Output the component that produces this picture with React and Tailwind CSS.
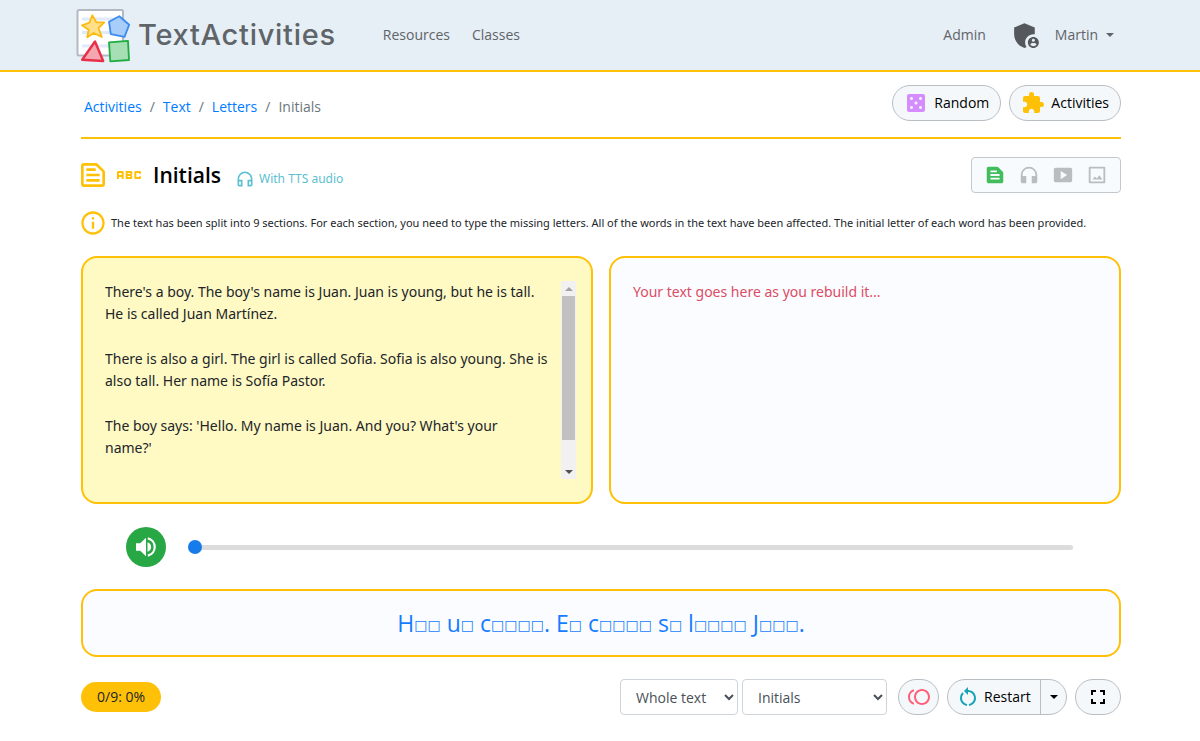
import React, { useState } from "react";
import {
  MdAdminPanelSettings,
  MdCasino,
  MdExtension,
  MdTextSnippet,
  MdOutlineTextSnippet,
  MdHeadphones,
  MdOutlineHeadphones,
  MdSmartDisplay,
  MdAbc,
  MdInfoOutline,
  MdToll,
  MdRestartAlt,
  MdFullscreen,
} from "react-icons/md";

const CRUMBS = ["Activities", "Text", "Letters"];

const PARAGRAPHS = [
  "There's a boy. The boy's name is Juan. Juan is young, but he is tall.\nHe is called Juan Martínez.",
  "There is also a girl. The girl is called Sofia. Sofia is also young. She is also tall. Her name is Sofía Pastor.",
  "The boy says: 'Hello. My name is Juan. And you? What's your\nname?'",
];

// every _ is a letter that still has to be typed
const PUZZLE = "H__ u_ c____. E_ c____ s_ l____ J___.";

function Logo() {
  return (
    <svg viewBox="0 0 55 55" className="h-[55px] w-[55px]" aria-hidden="true">
      <rect x="1.5" y="2" width="45.5" height="45.5" rx="1.5" fill="#fff" stroke="#b3b9c4" strokeWidth="2" />
      <path d="M6 11h36M6 24.5h36M6 38h36" stroke="#dfeafa" strokeWidth="3" />
      <g strokeWidth="1.8" strokeLinejoin="round">
        <path d="M16.3 7.3L20.3 14.3L28.3 14.3L22.5 20L25.8 29L17.7 25L11.3 29.3L12.6 21.8L6 17.3L13.5 14.6Z" fill="#ffe08a" stroke="#fdbb12" />
        <path d="M43.3 8.2L53.2 16.7L48.5 28.8L34.8 26.2L33 13.7Z" fill="#a9cdf9" stroke="#3b8cf0" />
        <path d="M19 33.5L6.2 51.8L27.2 53Z" fill="#f4a7b1" stroke="#e92f48" strokeWidth="2.4" />
        <path d="M33 34.3L52 32.8L53 52L34.3 53.3Z" fill="#a5dfb3" stroke="#1fad40" />
      </g>
    </svg>
  );
}

function SpeakerIcon() {
  return (
    <svg viewBox="0 0 24 24" className="h-6 w-6" aria-hidden="true">
      <path d="M2 8.2h4.2L12 2.8v18.4l-5.8-5.4H2z" fill="#fff" />
      <path d="M13.8 3.4a8.8 8.8 0 0 1 0 17.2" fill="none" stroke="#fff" strokeWidth="2.2" />
      <path d="M13.5 7.2a5 5 0 0 1 0 9.6z" fill="#fff" />
    </svg>
  );
}

function PictureIcon() {
  return (
    <svg viewBox="0 0 24 24" className="h-[22px] w-[22px]" aria-hidden="true">
      <path d="M4 4h16v16H4z" fill="none" stroke="currentColor" strokeWidth="2" strokeLinejoin="round" />
      <path d="M7 17l2.8-3.4 2 2.1 2.8-3.5 3.4 4.8z" fill="currentColor" />
    </svg>
  );
}

function Caret() {
  return <span className="inline-block border-x-4 border-t-4 border-x-transparent border-t-current" />;
}

// Scroll bar of the source text
function ScrollBar() {
  return (
    <div className="flex w-[15px] shrink-0 flex-col items-center bg-[#f1f1f1]" aria-hidden="true">
      <div className="flex h-[15px] items-center">
        <span className="border-x-4 border-b-4 border-x-transparent border-b-[#a3a3a3]" />
      </div>
      <div className="w-[13px] grow-[6] bg-[#c1c1c1]" />
      <div className="grow" />
      <div className="flex h-[15px] items-center">
        <span className="border-x-4 border-t-4 border-x-transparent border-t-[#505050]" />
      </div>
    </div>
  );
}

function Header() {
  return (
    <header className="border-b-2 border-[#ffc107] bg-[#e6eef6] text-[#5f6468]">
      <div className="mx-auto flex h-[70px] max-w-[1072px] items-center px-3">
        <a href="#" className="flex items-center gap-[7px]">
          <Logo />
          <span className="font-[Inter,sans-serif] text-[29px] font-medium tracking-wide">TextActivities</span>
        </a>
        <nav className="ml-[47px] flex gap-[22px]">
          <a href="#">Resources</a>
          <a href="#">Classes</a>
        </nav>
        <div className="ml-auto flex items-center">
          <a href="#">Admin</a>
          <MdAdminPanelSettings className="ml-6 h-[33px] w-[33px] text-[#54575c]" />
          <button type="button" className="ml-3 mr-2.5 flex items-center gap-2">
            Martin
            <Caret />
          </button>
        </div>
      </div>
    </header>
  );
}

export default function App() {
  const [position, setPosition] = useState(0);
  const [scope, setScope] = useState("Whole text");
  const [activity, setActivity] = useState("Initials");

  return (
    <div className="bg-white font-[Open_Sans,sans-serif] text-sm text-[#212529]">
      <Header />

      <main className="mx-auto max-w-[1072px] pr-[15px] pl-[17px]">
        <div className="flex items-center justify-between border-b-2 border-[#ffc107] pt-[13px] pb-4">
          <nav aria-label="Breadcrumb" className="flex gap-2 pl-[3px] pt-2 text-[#6c757d]">
            {CRUMBS.map((crumb) => (
              <React.Fragment key={crumb}>
                <a href="#" className="text-[#007bff]">{crumb}</a>
                <span>/</span>
              </React.Fragment>
            ))}
            <span>Initials</span>
          </nav>
          <div className="flex gap-2">
            <button type="button" className="flex h-9 items-center gap-1.5 rounded-full border border-[#b9bec3] bg-[#f4f8fb] px-[11px] text-black">
              <MdCasino className="h-6 w-6 text-[#d58cff]" />
              Random
            </button>
            <button type="button" className="flex h-9 items-center gap-1.5 rounded-full border border-[#b9bec3] bg-[#f4f8fb] px-[11px] text-black">
              <MdExtension className="h-6 w-6 text-[#ffc107]" />
              Activities
            </button>
          </div>
        </div>

        <div className="mt-[18px] flex items-center justify-between">
          <div className="flex items-center text-[#ffc107]">
            <MdOutlineTextSnippet className="-ml-1 h-8 w-8" />
            <MdAbc className="ml-1 h-8 w-8" />
            <h1 className="ml-2 text-[21px] font-semibold text-black">Initials</h1>
            <span className="ml-3.5 flex items-center gap-1 pt-2 font-[Noto_Sans,sans-serif] text-xs text-[#5bc0cf]">
              <MdOutlineHeadphones className="h-5 w-5" />
              With TTS audio
            </span>
          </div>
          <div className="flex h-9 items-center gap-3 rounded border border-[#c3c8cd] bg-[#f8fbfe] px-3 text-[#b9bdc0]">
            <MdTextSnippet className="h-[22px] w-[22px] text-[#41bd5c]" />
            <MdHeadphones className="h-[22px] w-[22px]" />
            <MdSmartDisplay className="h-[22px] w-[22px]" />
            <PictureIcon />
          </div>
        </div>

        <p className="mt-4 flex items-center gap-1 font-[Noto_Sans,sans-serif] text-[11px]">
          <MdInfoOutline className="-ml-0.5 h-7 w-7 shrink-0 text-[#ffc107]" />
          The text has been split into 9 sections. For each section, you need to type the missing letters. All of the words in the text have been affected. The initial letter of each word has been provided.
        </p>

        <div className="mt-[19px] grid grid-cols-2 gap-4 font-[Noto_Sans,sans-serif]">
          <section className="flex h-[248px] rounded-2xl border-2 border-[#ffc107] bg-[#fff9c4] py-[23px] pr-[15px] pl-[22px]">
            <div className="flex flex-1 flex-col gap-[23px] overflow-y-auto pr-2 leading-[22px] whitespace-pre-line">
              {PARAGRAPHS.map((text) => (
                <p key={text}>{text}</p>
              ))}
            </div>
            <ScrollBar />
          </section>
          <section className="h-[248px] rounded-2xl border-2 border-[#ffc107] bg-[#fafcff] px-[22px] py-[23px] leading-[22px] text-[#dc4c64]">
            Your text goes here as you rebuild it...
          </section>
        </div>

        <div className="mt-[23px] flex items-center gap-[22px] pr-12 pl-[45px]">
          <button type="button" aria-label="Play audio" className="flex h-10 w-10 shrink-0 items-center justify-center rounded-full bg-[#28a745]">
            <SpeakerIcon />
          </button>
          <input
            type="range"
            aria-label="Audio position"
            value={position}
            onChange={(e) => setPosition(Number(e.target.value))}
            className="h-[5px] flex-1 appearance-none rounded-full bg-[#dcdcdc] [&::-webkit-slider-thumb]:h-3.5 [&::-webkit-slider-thumb]:w-3.5 [&::-webkit-slider-thumb]:appearance-none [&::-webkit-slider-thumb]:rounded-full [&::-webkit-slider-thumb]:bg-[#167ce9]"
          />
        </div>

        <div className="mt-[22px] flex h-[68px] items-center justify-center rounded-2xl border-2 border-[#ffc107] bg-[#fafcff] text-[23px] text-[#167cff]">
          <p>
            {PUZZLE.split(/(_+)/).map((part, i) =>
              part.startsWith("_") ? (
                <span key={i} className="align-[2px] font-[DejaVu_Sans,sans-serif] text-sm">{part.replace(/_/g, "□")}</span>
              ) : (
                part
              )
            )}
          </p>
        </div>

        <div className="mt-[22px] mb-6 flex items-center justify-between">
          <span className="rounded-full bg-[#ffc107] px-4 py-[5px] leading-5 font-medium">0/9: 0%</span>
          <div className="flex items-center">
            <select
              aria-label="Text range"
              value={scope}
              onChange={(e) => setScope(e.target.value)}
              className="h-9 w-[118px] rounded border border-[#ced4da] bg-white pl-[11px] text-[#495057]"
            >
              <option>Whole text</option>
            </select>
            <select
              aria-label="Activity"
              value={activity}
              onChange={(e) => setActivity(e.target.value)}
              className="ml-1 h-9 w-[145px] rounded border border-[#ced4da] bg-white pl-[11px] text-[#495057]"
            >
              <option>Initials</option>
            </select>
            <button type="button" aria-label="Toggle hints" className="ml-[11px] flex h-9 w-[41px] items-center justify-center rounded-full border border-[#b9bec3] bg-[#f4f8fb]">
              <MdToll className="h-6 w-6 text-[#ff6079]" />
            </button>
            <div className="ml-2 flex h-9 items-stretch rounded-full border border-[#b9bec3] bg-[#f4f8fb] text-black">
              <button type="button" className="flex w-[93px] items-center gap-1 border-r border-[#b9bec3] pl-2">
                <MdRestartAlt className="h-6 w-6 text-[#17a2b8]" />
                Restart
              </button>
              <button type="button" aria-label="More restart options" className="flex w-[25px] items-center justify-center">
                <Caret />
              </button>
            </div>
            <button type="button" aria-label="Full screen" className="ml-2 flex h-9 w-[46px] items-center justify-center rounded-full border border-[#b9bec3] bg-[#f4f8fb] text-black">
              <MdFullscreen className="h-6 w-6" />
            </button>
          </div>
        </div>
      </main>
    </div>
  );
}
